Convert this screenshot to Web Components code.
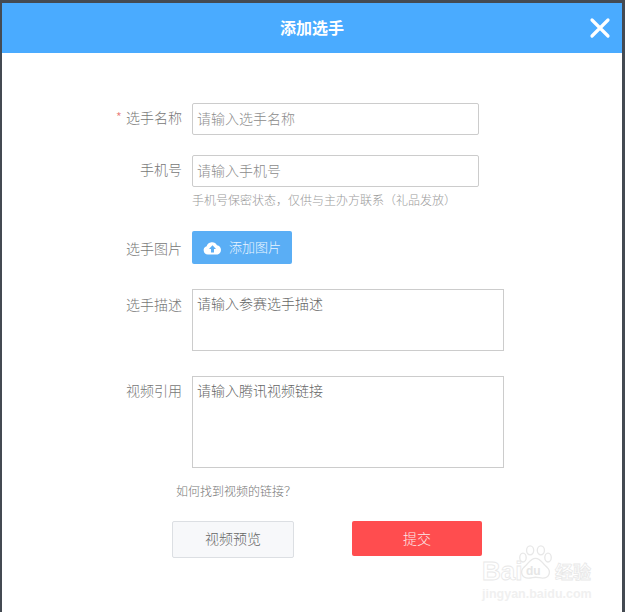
<!DOCTYPE html>
<html lang="zh"><head><meta charset="utf-8"><title>添加选手</title>
<style>
html,body{margin:0;padding:0;height:100%;overflow:hidden}
body{background:#444a52;font-family:"Noto Sans CJK SC","Liberation Sans",sans-serif;font-weight:300;width:625px;height:612px}
</style></head><body>
<player-dialog heading="添加选手">
  <form-row label="选手名称" required top="0" pad="4"><text-field w="287" h="32">请输入选手名称</text-field></form-row>
  <form-row label="手机号" top="20" pad="4"><text-field w="287" h="32">请输入手机号</text-field><span slot="hint">手机号保密状态，仅供与主办方联系（礼品发放）</span></form-row>
  <form-row label="选手图片" top="23" pad="7"><upload-button>添加图片</upload-button></form-row>
  <form-row label="选手描述" top="25" pad="5"><text-area w="312" h="62">请输入参赛选手描述</text-area></form-row>
  <form-row label="视频引用" top="25" pad="4"><text-area w="312" h="92">请输入腾讯视频链接</text-area></form-row>
  <help-link>如何找到视频的链接？</help-link>
  <action-bar><action-button slot="a" kind="plain">视频预览</action-button><action-button slot="b" kind="red">提交</action-button></action-bar>
  <baidu-mark slot="mark"></baidu-mark>
</player-dialog>
<script>
const def=(n,html,extra={})=>customElements.define(n,class extends HTMLElement{
  constructor(){super();this.attachShadow({mode:'open'}).innerHTML=html;}
  connectedCallback(){extra.init&&extra.init(this)}
});
def('player-dialog',`<style>
:host{display:flex;flex-direction:column;box-sizing:border-box;height:612px;margin:0 3px 0 2px;padding-top:3px;position:relative}
header{height:50px;flex:none;background:#4aabff;display:flex;align-items:center;justify-content:center;position:relative;color:#fff;font-size:16px;font-weight:700}
h1{font:inherit;margin:0 0 2px}
.x{position:absolute;right:11px;top:14px;width:22px;height:22px}
main{flex:1;background:#fff;padding-top:50px;position:relative}
</style><header><h1 id="t"></h1><svg class="x" viewBox="0 0 22 22"><path d="M3 3L19 19M19 3L3 19" stroke="#fff" stroke-width="3.2" stroke-linecap="round" fill="none"/></svg></header><main><slot></slot><slot name="mark"></slot></main>`,
{init(e){e.shadowRoot.getElementById('t').textContent=e.getAttribute('heading')}});
def('form-row',`<style>
:host{display:flex;align-items:flex-start;color:#777;font-size:14px}
.l{width:180px;box-sizing:border-box;text-align:right;line-height:20px;flex:none;white-space:nowrap}
.s{color:#ea7a7a;margin-right:4px}
.c{margin-left:10px;display:flex;flex-direction:column}
::slotted([slot=hint]){font-size:12px;color:#999;line-height:16px;margin-top:5px;white-space:nowrap}
</style><div class="l" id="l"></div><div class="c"><slot></slot><slot name="hint"></slot></div>`,
{init(e){const l=e.shadowRoot.getElementById('l');
 l.innerHTML=(e.hasAttribute('required')?'<span class="s">*</span>':'')+e.getAttribute('label');
 l.style.paddingTop=(e.getAttribute('pad')||5)+'px';
 e.style.marginTop=(e.getAttribute('top')||0)+'px';}});
const box=(r,c)=>`<style>
:host{display:block;box-sizing:border-box;border:1px solid #ccc;border-radius:${r}px;color:${c};font-size:14px;background:#fff;padding:0 4px}
</style><slot></slot>`;
def('text-field',box(2,'#8c8c8c'),{init(e){e.style.width=e.getAttribute('w')+'px';e.style.height=e.getAttribute('h')+'px';e.style.lineHeight=(e.getAttribute('h')-4)+'px'}});
def('text-area',box(0,'#666'),{init(e){e.style.width=e.getAttribute('w')+'px';e.style.height=e.getAttribute('h')+'px';e.style.lineHeight='20px';e.style.paddingTop='3px'}});
def('upload-button',`<style>
:host{display:flex;align-items:center;box-sizing:border-box;width:100px;height:33px;background:#5aaef5;border-radius:2px;color:#eaf5ff;font-size:13px;padding:0 0 2px 11px}
svg{width:19px;height:14px;margin:2px 7px 0 0;flex:none}
</style><svg viewBox="0 0 19 14"><path fill="#fff" d="M5 13.5A4.2 4.2 0 0 1 3.6 5.3 5.6 5.6 0 0 1 14 4.2 4.8 4.8 0 0 1 14.6 13.5Z"/><path fill="#5aaef5" d="M9.5 4.2L13 8H11V11.5H8V8H6Z"/></svg><slot></slot>`);
def('help-link',`<style>:host{display:block;margin:15px 0 0 174px;font-size:12px;line-height:16px;color:#777}</style><slot></slot>`);
def('action-bar',`<style>:host{display:flex;align-items:flex-start;margin:22px 0 0 170px;gap:58px}</style><slot name="a"></slot><slot name="b"></slot>`);
def('action-button',`<style>
:host{display:flex;align-items:center;justify-content:center;box-sizing:border-box;font-size:14px;border-radius:2px}
:host([kind=plain]){width:122px;height:37px;background:#f7f8fa;border:1px solid #dcdfe3;color:#666;padding-bottom:3px}
:host([kind=red]){width:130px;height:35px;background:#ff4d4f;color:#fbeaea;padding-bottom:2px}
</style><slot></slot>`);
def('baidu-mark',`<style>
:host{position:absolute;left:478px;top:490px;width:115px;height:70px;color:#fff;font-family:"Liberation Sans",sans-serif;display:block}
span{-webkit-text-stroke:.8px #e8e8e8}
.a{position:absolute;left:2px;top:14px;font-size:26px;line-height:28px;font-weight:700}
.z{position:absolute;left:75px;top:16px;font:700 18px/24px "Noto Sans CJK SC",sans-serif}
.b{position:absolute;left:2px;top:44px;font-size:12.5px;line-height:14px;font-weight:700;white-space:nowrap;color:#f0f0f0;-webkit-text-stroke:0}
.d{position:absolute;left:46px;top:22px;font-size:12px;line-height:12px;font-weight:700;color:#e6e6e6;-webkit-text-stroke:0}
svg{position:absolute;left:38px;top:2px;width:35px;height:34px}
</style><span class="a">Bai</span><svg viewBox="0 0 38 38" fill="none" stroke="#e8e8e8" stroke-width="1.5"><ellipse cx="5" cy="14" rx="3.6" ry="5"/><ellipse cx="13" cy="6" rx="4" ry="5"/><ellipse cx="25" cy="6" rx="4" ry="5"/><ellipse cx="33" cy="14" rx="3.6" ry="5"/><path d="M19 15C13 15 11 21 6 25C1 30 4 37 11 37C15 37 16 36 19 36C22 36 24 37 27 37C34 37 37 30 32 25C27 21 25 15 19 15Z"/></svg><span class="d">du</span><span class="z">经验</span><span class="b">jingyan.baidu.com</span>`);
</script></body></html>
